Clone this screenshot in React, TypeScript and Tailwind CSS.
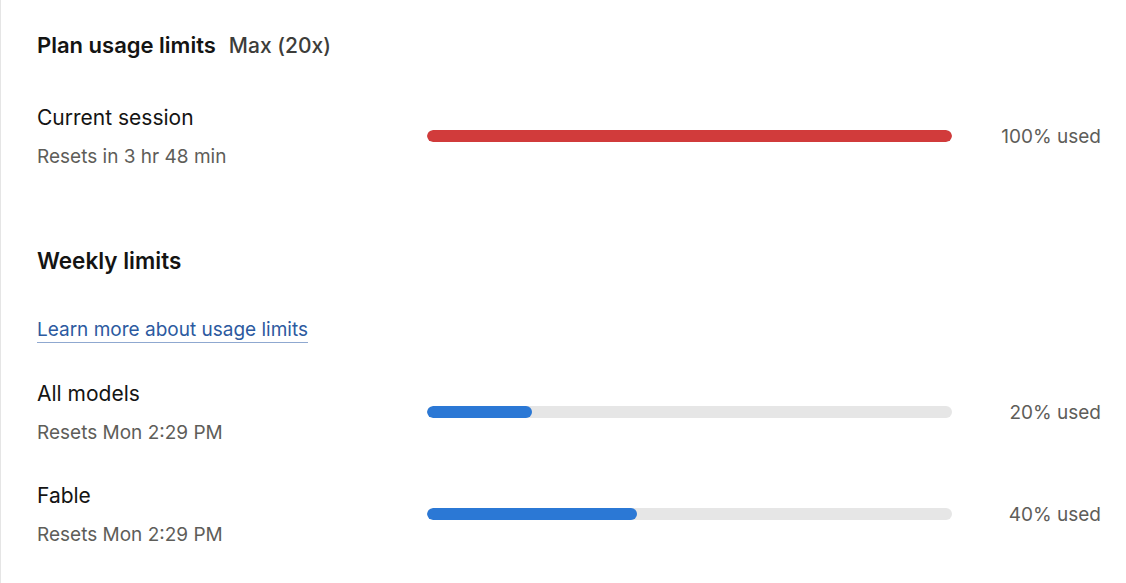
import React from "react";

type Limit = {
  name: string;
  resets: string;
  pct: number;
  color: string;
};

const SESSION: Limit = { name: "Current session", resets: "Resets in 3 hr 48 min", pct: 100, color: "bg-[#d13b3b]" };

const WEEKLY: Limit[] = [
  { name: "All models", resets: "Resets Mon 2:29 PM", pct: 20, color: "bg-[#2b78d5]" },
  { name: "Fable", resets: "Resets Mon 2:29 PM", pct: 40, color: "bg-[#2b78d5]" },
];

function UsageRow({ item }: { item: Limit }) {
  return (
    <div className="flex items-center">
      <div className="w-[390px] shrink-0">
        <div className="text-[21px] leading-[24px] text-[#141413]">{item.name}</div>
        <div className="mt-[15px] text-[19px] leading-[24px] text-[#5e5d59]">{item.resets}</div>
      </div>
      <div className="flex-1 mb-[2px] h-[12px] rounded-full bg-[#e6e6e6] overflow-hidden">
        <div className={`h-full rounded-full ${item.color}`} style={{ width: `${item.pct}%` }} />
      </div>
      <div className="w-[149px] shrink-0 text-right text-[19px] text-[#5e5d59]">{item.pct}% used</div>
    </div>
  );
}

export default function App() {
  return (
    <div
      className="w-[1126px] h-[583px] bg-white border-l border-[#e5e5e5] overflow-hidden"
      style={{ fontFamily: "Inter, 'Noto Sans', sans-serif" }}
    >
      <div className="pl-[36px] pr-[25px] pt-[30px]">
        {/* 헤더 */}
        <div className="flex items-baseline gap-[13px]">
          <h2 className="text-[22px] leading-[28px] font-semibold text-[#141413]">Plan usage limits</h2>
          <span className="text-[21px] font-medium text-[#3d3d3a]">Max (20x)</span>
        </div>

        <div className="mt-[44px]">
          <UsageRow item={SESSION} />
        </div>

        {/* 주간 한도 */}
        <h3 className="mt-[78px] text-[22.5px] leading-[28px] font-semibold text-[#141413]">Weekly limits</h3>

        <a
          href="#"
          className="inline-block mt-[43px] text-[19px] leading-[24px] text-[#2c5aa0] border-b border-[#8fa8d0]"
        >
          Learn more about usage limits
        </a>

        <div className="mt-[39px] flex flex-col gap-[39px]">
          {WEEKLY.map((w) => (
            <UsageRow key={w.name} item={w} />
          ))}
        </div>
      </div>
    </div>
  );
}
